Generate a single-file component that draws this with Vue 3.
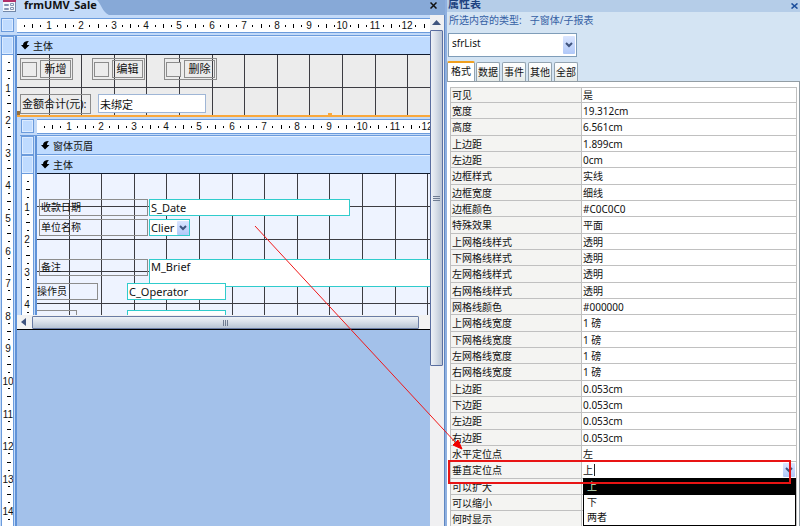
<script setup>
import { ref } from 'vue'

const UNIT = 32.6

function ticks(origin, count) {
  const out = []
  for (let n = 0; n < count; n++) {
    const at = f => Math.round(origin + (n + f) * UNIT)
    out.push({ n: n + 1, q1: at(0.25), half: at(0.5), q3: at(0.75), whole: at(1) })
  }
  return out
}

const topTicks = ticks(-1, 40)
const sideTicks = ticks(0, 60)
const subTopTicks = ticks(-1, 40)
const subSideTicks = ticks(0, 8)

const topGrid = ticks(0, 40).map(t => t.whole - 1)
const subGrid = ticks(-1, 40).map(t => t.whole)
const subRows = [32, 65, 97, 129]

const object = ref('sfrList')
const anchor = ref('上')
const brief = ref('M_Brief')
const tabs = ['格式', '数据', '事件', '其他', '全部']
const options = ['上', '下', '两者']
const buttons = ['新增', '编辑', '删除']
const props = [
  ['可见', '是'],
  ['宽度', '19.312cm'],
  ['高度', '6.561cm'],
  ['上边距', '1.899cm'],
  ['左边距', '0cm'],
  ['边框样式', '实线'],
  ['边框宽度', '细线'],
  ['边框颜色', '#C0C0C0'],
  ['特殊效果', '平面'],
  ['上网格线样式', '透明'],
  ['下网格线样式', '透明'],
  ['左网格线样式', '透明'],
  ['右网格线样式', '透明'],
  ['网格线颜色', '#000000'],
  ['上网格线宽度', '1 磅'],
  ['下网格线宽度', '1 磅'],
  ['左网格线宽度', '1 磅'],
  ['右网格线宽度', '1 磅'],
  ['上边距', '0.053cm'],
  ['下边距', '0.053cm'],
  ['左边距', '0.053cm'],
  ['右边距', '0.053cm'],
  ['水平定位点', '左'],
  ['垂直定位点', null],
  ['可以扩大', ''],
  ['可以缩小', ''],
  ['何时显示', '']
]
</script>

<template>
  <div class="app">
    <section class="editor">
      <header class="doc-bar">
        <div class="doc-tab">
          <svg class="doc-icon" width="14" height="12" viewBox="0 0 14 12">
            <path d="M1 0h13v11H1z" fill="#f4f7fc" />
            <path d="M1 0h13v2H1z" fill="#b0306a" />
            <path d="M13 2h1v10H1v-1h12z" fill="#7287a8" />
            <path d="M2.500 4.500h4v1h-4zM8.500 3.500h3v2h-3zM2.500 8.500h4v1h-4zM8.500 7.500h3v2h-3z" fill="none" stroke="#8494b4" />
          </svg>
          <span>frmUMV_Sale</span>
        </div>
        <svg class="doc-slope" width="12" height="15" viewBox="0 0 12 15">
          <path d="M0 0C3 2 6 13 12 15H0z" fill="#c3daf8" />
        </svg>
        <button class="doc-close" aria-label="关闭">
          <svg width="7" height="7" viewBox="0 0 7 7"><path d="M.5.500l6 6M6.500.500l-6 6" stroke="#111" stroke-width="1.500" /></svg>
        </button>
      </header>

      <div class="work">
        <div class="design">
          <div class="corner-cell"><i class="picker"></i></div>
          <div class="ruler-cell">
            <svg class="ruler" aria-hidden="true">
              <g v-for="t in topTicks" :key="t.n">
                <rect :x="t.q1" y="6" width="1" height="2" />
                <rect :x="t.half" y="5" width="1" height="4" />
                <rect :x="t.q3" y="6" width="1" height="2" />
                <text :x="t.whole" y="10">{{ t.n }}</text>
              </g>
            </svg>
          </div>
          <div class="side-cell">
            <i class="picker tall"></i>
            <svg class="side" aria-hidden="true">
              <g v-for="t in sideTicks" :key="t.n">
                <rect x="6" :y="t.q1 - 1" width="2" height="1" />
                <rect x="5" :y="t.half - 1" width="4" height="1" />
                <rect x="6" :y="t.q3 - 1" width="2" height="1" />
                <text x="6" :y="t.whole + 4">{{ t.n }}</text>
              </g>
            </svg>
          </div>

          <div class="page">
            <h2 class="band dark-line">
              <svg width="9" height="9" viewBox="0 0 9 9"><path d="M0 4h2C2 1.500 4 0 8 0 6.500 1.500 6 2.500 6 4h2.500L4 8.500z" /></svg>主体
            </h2>
            <div class="canvas main-canvas">
              <svg class="grid" aria-hidden="true">
                <rect v-for="x in topGrid" :key="x" :x="x" y="0" width="1" height="100%" />
                <rect x="0" y="32" width="100%" height="1" />
              </svg>
              <div v-for="(b, i) in buttons" :key="b" class="btn-group" :class="'g' + i">
                <i class="box"></i>
                <button>{{ b }}</button>
              </div>
              <label class="lbl total-lbl" for="total">金额合计(元):</label>
              <input id="total" class="total" value="未绑定">
              <i class="handle left"></i>
              <i class="handle mid"></i>
            </div>

            <div class="subform">
              <div class="corner-cell"><i class="picker"></i></div>
              <div class="ruler-cell">
                <svg class="ruler" aria-hidden="true">
                  <g v-for="t in subTopTicks" :key="t.n">
                    <rect :x="t.q1" y="6" width="1" height="2" />
                    <rect :x="t.half" y="5" width="1" height="4" />
                    <rect :x="t.q3" y="6" width="1" height="2" />
                    <text :x="t.whole" y="10">{{ t.n }}</text>
                  </g>
                </svg>
              </div>
              <div class="side-cell">
                <i class="picker tall"></i>
                <i class="picker tall"></i>
                <svg class="side" aria-hidden="true">
                  <g v-for="t in subSideTicks" :key="t.n">
                    <rect x="5" :y="t.q1 - 1" width="2" height="1" />
                    <rect x="4" :y="t.half - 1" width="4" height="1" />
                    <rect x="5" :y="t.q3 - 1" width="2" height="1" />
                    <text x="5" :y="t.whole + 4">{{ t.n }}</text>
                  </g>
                </svg>
              </div>
              <div class="sub-page">
                <h3 class="band">
                  <svg width="9" height="9" viewBox="0 0 9 9"><path d="M0 4h2C2 1.500 4 0 8 0 6.500 1.500 6 2.500 6 4h2.500L4 8.500z" /></svg>窗体页眉
                </h3>
                <h3 class="band dark-line">
                  <svg width="9" height="9" viewBox="0 0 9 9"><path d="M0 4h2C2 1.500 4 0 8 0 6.500 1.500 6 2.500 6 4h2.500L4 8.500z" /></svg>主体
                </h3>
                <div class="canvas sub-canvas">
                  <svg class="grid" aria-hidden="true">
                    <rect v-for="x in subGrid" :key="x" :x="x" y="0" width="1" height="100%" />
                    <rect v-for="y in subRows" :key="'r' + y" x="0" :y="y" width="100%" height="1" />
                  </svg>
                  <label class="lbl l-date" for="f-date">收款日期</label>
                  <input id="f-date" class="field f-date" value="S_Date">
                  <label class="lbl l-client" for="f-client">单位名称</label>
                  <div class="field f-client">
                    <select id="f-client"><option>Clier</option></select>
                    <span class="drop"><svg width="8" height="6" viewBox="0 0 8 6"><path d="M1 1l3 3 3-3" /></svg></span>
                  </div>
                  <label class="lbl l-brief" for="f-brief">备注</label>
                  <textarea id="f-brief" v-model="brief" class="field f-brief"></textarea>
                  <label class="lbl l-oper" for="f-oper">操作员</label>
                  <input id="f-oper" class="field f-oper" value="C_Operator">
                  <i class="lbl l-next"></i>
                  <i class="field f-next"></i>
                </div>
              </div>
            </div>

            <div class="hscroll">
              <svg class="h-arrow" width="15" height="14" viewBox="0 0 15 14"><path d="M9 3v8L4 7z" fill="#40547e" /></svg>
              <div class="h-thumb"><i></i><i></i><i></i></div>
            </div>
          </div>
        </div>

        <div class="vscroll">
          <svg width="13" height="15" viewBox="0 0 13 15"><path d="M2 10h9L6.500 5z" fill="#40547e" /></svg>
          <div class="v-thumb"><i></i><i></i><i></i></div>
        </div>
      </div>
    </section>

    <aside class="sheet">
      <header class="sheet-title">
        <b>属性表</b>
        <button aria-label="关闭属性表">
          <svg width="7" height="6" viewBox="0 0 7 6"><path d="M.5.500l6 5M6.500.500l-6 5" stroke="#1d4f9c" stroke-width="1.600" /></svg>
        </button>
      </header>
      <p class="kind"><span>所选内容的类型:</span><span>子窗体/子报表</span></p>
      <div class="picker-box">
        <select v-model="object" aria-label="对象"><option>sfrList</option></select>
        <span class="drop"><svg width="8" height="6" viewBox="0 0 8 6"><path d="M1 1l3 3 3-3" /></svg></span>
      </div>
      <nav class="tabs">
        <button v-for="(t, i) in tabs" :key="t" :class="{ active: i === 0 }">{{ t }}</button>
      </nav>
      <div class="props-page">
        <table>
          <tbody>
            <tr v-for="(p, i) in props" :key="i">
              <th scope="row"><label v-if="p[1] === null" for="anchor">{{ p[0] }}</label><template v-else>{{ p[0] }}</template></th>
              <td v-if="p[1] !== null">{{ p[1] }}</td>
              <td v-else class="editing">
                <div class="edit-line">
                  <input id="anchor" v-model="anchor" size="1">
                  <i class="caret"></i>
                  <span class="drop"><svg width="8" height="6" viewBox="0 0 8 6"><path d="M1 1l3 3 3-3" /></svg></span>
                </div>
                <ul class="menu">
                  <li v-for="(o, k) in options" :key="o" :class="{ on: k === 0 }">{{ o }}</li>
                </ul>
              </td>
            </tr>
          </tbody>
        </table>
        <div class="mark"></div>
      </div>
    </aside>

    <svg class="pointer" width="800" height="526" viewBox="0 0 800 526" aria-hidden="true">
      <path d="M255 226L456 443" stroke="#f01818" fill="none" />
      <path d="M462 449l-9-4 5-5z" fill="#f00000" stroke="#f00000" />
    </svg>
  </div>
</template>

<style>
body {
  margin: 0;
  overflow: hidden;
}
</style>

<style scoped>
* {
  box-sizing: border-box;
}
.app {
  position: relative;
  display: grid;
  grid-template-columns: minmax(0, 445fr) minmax(0, 355fr);
  height: 100vh;
  overflow: hidden;
  background: #c3daf8;
  color: #111;
  font: 10px/14px "Noto Sans", "Noto Sans CJK SC", sans-serif;
}
button, input, select, textarea {
  margin: 0;
  padding: 0;
  border: 0;
  background: none;
  color: inherit;
  font: inherit;
  appearance: none;
  outline: 0;
  border-radius: 0;
}
.editor {
  display: flex;
  flex-direction: column;
  min-width: 0;
  min-height: 0;
}
.doc-bar {
  flex: none;
  display: flex;
  height: 15px;
  background: #87a9d7;
  overflow: hidden;
}
.doc-tab {
  display: flex;
  align-items: flex-start;
  gap: 8px;
  padding: 0 0 0 2px;
  background: #c3daf8;
  font-weight: bold;
  font-size: 11px;
  line-height: 10px;
}
.doc-close {
  display: flex;
  align-items: center;
  height: 10px;
  margin-left: auto;
  margin-right: 8px;
}
.work {
  flex: 1;
  display: flex;
  min-height: 0;
}
.design {
  flex: 1;
  min-width: 0;
  display: grid;
  grid-template-columns: 17px minmax(0, 1fr);
  grid-template-rows: 21px minmax(0, 1fr);
}
.corner-cell {
  padding: 3px 3px 3px 1px;
  border-bottom: 1px solid #6b9bdc;
}
.picker {
  display: block;
  height: 14px;
  border: 1px solid #6b9bdc;
  background: #bfdbff;
  box-shadow: inset 0 0 0 1px #dcebff;
}
.picker.tall {
  height: 19px;
}
.ruler-cell {
  padding: 3px 0 2px;
  border-bottom: 1px solid #6b9bdc;
}
.ruler {
  display: block;
  width: 100%;
  height: 15px;
  background: #fff;
  border: solid #6b9bdc;
  border-width: 1px 0;
  overflow: hidden;
}
.ruler text, .side text {
  font: 10px "Liberation Sans", sans-serif;
  text-anchor: middle;
  fill: #111;
}
.side-cell {
  display: flex;
  flex-direction: column;
  min-height: 0;
  padding-left: 1px;
  padding-right: 1px;
  border-right: 2px solid #5f92d8;
}
.side-cell .picker {
  flex: none;
}
.side {
  flex: 1;
  display: block;
  width: 100%;
  min-height: 0;
  background: #fff;
  border: solid #6b9bdc;
  border-width: 0 1px;
  overflow: hidden;
}
.page {
  display: flex;
  flex-direction: column;
  min-width: 0;
  min-height: 0;
  background: #a3c1ea;
}
.band {
  flex: none;
  display: flex;
  align-items: center;
  gap: 3px;
  height: 19px;
  margin: 0;
  padding-left: 4px;
  border-bottom: 1px solid #6b9bdc;
  border-top: 1px solid #e6f1ff;
  background: #bfdbff;
  font-size: 10px;
  font-weight: normal;
}
.band.dark-line {
  border-bottom-color: #111a2c;
}
.canvas {
  position: relative;
  overflow: hidden;
}
.main-canvas {
  flex: none;
  height: 62px;
  background: #ececec;
  border-bottom: 2px solid #f9a83c;
}
.grid {
  position: absolute;
  inset: 0;
  width: 100%;
  height: 100%;
}
.grid rect {
  fill: #3c3c42;
}
.btn-group {
  position: absolute;
  top: 3px;
  display: flex;
  align-items: center;
  gap: 3px;
  height: 22px;
  padding: 0 1px;
  border: 1px solid #8c8c8c;
}
.btn-group.g0 { left: 3px; }
.btn-group.g1 { left: 75px; }
.btn-group.g2 { left: 147px; }
.btn-group .box {
  width: 15px;
  height: 15px;
  border: 1px solid #8c8c8c;
  background: #ececec;
}
.btn-group button {
  width: 31px;
  height: 18px;
  border: 1px solid #8c8c8c;
  font-size: 11px;
  line-height: 16px;
}
.lbl {
  position: absolute;
  height: 17px;
  border: 1px solid #8c8c8c;
  padding-left: 1px;
  line-height: 15px;
  white-space: nowrap;
}
.lbl.total-lbl {
  left: 3px;
  top: 39px;
  width: 71px;
  height: 20px;
  font-size: 11px;
  line-height: 18px;
}
.total {
  position: absolute;
  left: 81px;
  top: 39px;
  width: 108px;
  height: 19px;
  padding-left: 1px;
  border: 1px solid #9fb6d6;
  background: #fff;
  font-size: 11px;
}
.handle {
  position: absolute;
  bottom: 0;
  width: 4px;
  height: 2px;
  background: #f9a83c;
}
.handle.left {
  left: 0;
  width: 3px;
  height: 4px;
  background: #96703c;
}
.handle.mid {
  left: 311px;
}
.subform {
  flex: none;
  display: grid;
  grid-template-columns: 17px minmax(0, 1fr);
  grid-template-rows: 19px 179px;
  padding-left: 3px;
  background: #c3daf8;
}
.subform .ruler-cell, .subform .corner-cell {
  padding-top: 2px;
  padding-bottom: 1px;
}
.sub-page {
  min-width: 0;
}
.sub-canvas {
  height: 141px;
  background: #eef3ff;
}
.field {
  position: absolute;
  height: 17px;
  padding-left: 1px;
  border: 1px solid #30cccc;
  background: #fff;
  font-size: 11px;
  line-height: 14px;
}
.l-date, .l-client, .l-brief { left: 2px; width: 109px; }
.l-date, .f-date { top: 25px; }
.l-client, .f-client { top: 45px; }
.l-brief, .f-brief { top: 85px; }
.l-oper, .f-oper { top: 109px; }
.l-next, .f-next { top: 136px; }
.f-date { left: 112px; width: 201px; }
.f-client { left: 112px; width: 41px; display: flex; align-items: center; }
.f-client select { flex: 1; min-width: 0; width: 0; overflow: hidden; text-overflow: clip; }
.f-brief { left: 112px; right: -2px; width: calc(100% - 110px); height: 28px; resize: none; overflow: hidden; }
.l-oper { left: -1px; width: 62px; padding-left: 0; }
.f-oper { left: 90px; width: 99px; }
.l-next { left: -1px; width: 41px; }
.f-next { left: 90px; width: 99px; }
.drop {
  flex: none;
  display: grid;
  place-items: center;
  width: 12px;
  height: 14px;
  border-radius: 1px;
  background: linear-gradient(#dbe6ff, #b0c8f8);
  pointer-events: none;
}
.drop path {
  fill: none;
  stroke: #40547e;
  stroke-width: 2;
}
.hscroll {
  flex: none;
  display: flex;
  height: 15px;
  padding-right: 11px;
  background: #f2f2f2;
  border-bottom: 1px solid #000;
}
.h-arrow {
  flex: none;
}
.h-thumb {
  flex: 1;
  display: flex;
  align-items: center;
  justify-content: center;
  gap: 1px;
  height: 13px;
  margin-top: 1px;
  border: 1px solid #6a7ca4;
  border-radius: 1px;
  background: linear-gradient(#eef2f7, #dbe1ea 40%, #b8c4d4);
}
.h-thumb i {
  width: 1px;
  height: 6px;
  background: #6f7c92;
}
.vscroll {
  flex: none;
  display: flex;
  flex-direction: column;
  width: 15px;
  padding-right: 1px;
  border-right: 1px solid #5f86c0;
  background: #f0f0f2;
}
.vscroll > svg {
  flex: none;
}
.v-thumb {
  display: flex;
  flex-direction: column;
  align-items: center;
  justify-content: center;
  gap: 1px;
  height: 336px;
  border: 1px solid #5a6ea0;
  border-radius: 1px;
  background: linear-gradient(90deg, #eef2f7, #dbe1ea 40%, #b8c4d4);
}
.v-thumb i {
  width: 7px;
  height: 1px;
  background: #6f7c92;
}
.sheet {
  display: flex;
  flex-direction: column;
  min-width: 0;
  min-height: 0;
  border-left: 2px solid #8fb0e0;
  background: #d4e4f3;
}
.sheet-title {
  flex: none;
  display: flex;
  justify-content: space-between;
  height: 12px;
  padding: 0 2px 0 1px;
  background: #b5cde8;
  color: #1d4280;
  font-size: 11px;
  line-height: 8px;
}
.sheet-title button {
  display: flex;
  align-items: center;
  height: 11px;
}
.kind {
  display: flex;
  gap: 8px;
  margin: 0;
  padding: 1px 0 0 2px;
  height: 21px;
  color: #3560a4;
}
.picker-box {
  display: flex;
  width: 129px;
  height: 24px;
  margin-left: 1px;
  padding: 2px 1px 2px 3px;
  border: 1px solid #7f9db9;
  background: #fff;
}
.picker-box select {
  flex: 1;
  height: 14px;
}
.picker-box .drop, .picker-box .drop svg {
  align-self: center;
}
.picker-box .drop {
  height: 18px;
}
.tabs {
  flex: none;
  display: flex;
  gap: 2px;
  height: 24px;
  padding-top: 5px;
}
.tabs button {
  width: 24px;
  height: 19px;
  border: solid #93a3b0;
  border-width: 1px 1px 0;
  border-radius: 2px 2px 0 0;
  background: linear-gradient(#fff, #e6ebe9);
  white-space: nowrap;
}
.tabs button.active {
  width: 28px;
  height: 21px;
  margin-top: -1px;
  margin-right: -1px;
  padding-bottom: 3px;
  border-top: 2px solid #f0a020;
  background: #fff;
}
.props-page {
  position: relative;
  flex: 1;
  min-height: 0;
  padding: 5px 2px 0 3px;
  border-top: 1px solid #939da4;
  border-right: 1px solid #939da4;
  background: #fff;
}
table {
  width: 100%;
  table-layout: fixed;
  border-spacing: 0;
  border: solid #c0c0c0;
  border-width: 1px 1px 0;
}
tr { height: 16px; }
tr:first-child { height: 15px; }
tr:nth-child(3n) { height: 17px; }
th, td {
  padding: 0 1px;
  border-bottom: 1px solid #c0c0c0;
  line-height: 14px;
  font-weight: normal;
  text-align: left;
  white-space: nowrap;
}
th {
  width: 131px;
  border-right: 1px solid #c0c0c0;
  background: #f4f4f2;
}
.editing {
  position: relative;
}
.edit-line {
  display: flex;
  align-items: center;
  height: 14px;
}
.edit-line input {
  width: 11px;
  height: 14px;
}
.edit-line .caret {
  width: 1px;
  height: 12px;
  background: #222;
}
.edit-line .drop {
  margin-left: auto;
}
.menu {
  position: absolute;
  z-index: 1;
  top: 16px;
  left: 1px;
  right: 0;
  margin: 0;
  padding: 0;
  border: 1px solid #000;
  background: #fff;
  list-style: none;
}
.menu li {
  height: 15px;
  padding-left: 3px;
  line-height: 15px;
}
.menu .on {
  height: 16px;
  background: #000;
  color: #c8e8c0;
}
.mark {
  position: absolute;
  z-index: 2;
  top: 378px;
  left: 1px;
  right: 8px;
  height: 24px;
  border: 2px solid #e81414;
}
.pointer {
  position: absolute;
  z-index: 3;
  top: 0;
  left: 0;
  pointer-events: none;
}
</style>
